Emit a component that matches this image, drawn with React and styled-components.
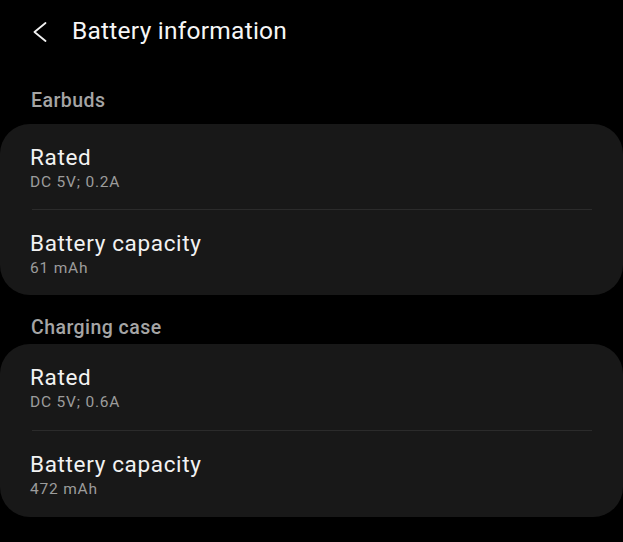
import React from 'react'
import styled, { createGlobalStyle } from 'styled-components'

const GlobalStyle = createGlobalStyle`
  html, body {
    margin: 0;
    padding: 0;
    background: #000;
  }
  body {
    font-family: Roboto, "Noto Sans", sans-serif;
    -webkit-font-smoothing: antialiased;
  }
`

const ScreenStyled = styled.div`
  width: 623px;
  min-height: 542px;
  background: #000;
  color: #f4f4f4;
  overflow: hidden;
`

const HeaderStyled = styled.header`
  height: 62px;
  display: flex;
  align-items: center;
  padding-left: 33px;
  gap: 25px;
`

const BackButtonStyled = styled.button`
  display: flex;
  align-items: center;
  justify-content: center;
  width: 14px;
  height: 20px;
  padding: 0;
  margin-top: 2px;
  border: none;
  background: none;
  cursor: pointer;
`

const TitleStyled = styled.h1`
  margin: 0;
  font-size: 24.5px;
  line-height: 30px;
  font-weight: 400;
  letter-spacing: 0.25px;
  color: #f6f6f6;
`

const SectionLabelStyled = styled.h2`
  margin: ${props => props.$top}px 0 ${props => props.$bottom}px;
  padding-left: 31px;
  font-size: 19.5px;
  line-height: 24px;
  font-weight: 500;
  letter-spacing: 0.45px;
  color: #a5a5a5;
`

const CardStyled = styled.section`
  background: #181818;
  border-radius: 30px;
  display: flex;
  flex-direction: column;
`

const RowStyled = styled.div`
  padding: 19px 31px ${props => props.$bottom}px 30px;
  display: flex;
  flex-direction: column;
`

const DividerStyled = styled.div`
  height: 1px;
  margin: 0 31px 0 32px;
  background: #2b2b2b;
`

const RowTitleStyled = styled.div`
  font-size: 22.5px;
  line-height: 28px;
  letter-spacing: 0.65px;
  color: #f2f2f2;
`

const RowValueStyled = styled.div`
  margin-top: 1px;
  font-size: 15.5px;
  line-height: 20px;
  letter-spacing: 0.8px;
  color: #9c9c9c;
`

const sections = [
  {
    label: 'Earbuds',
    top: 27,
    bottom: 11,
    rowBottom: 17,
    rows: [
      { title: 'Rated', value: 'DC 5V; 0.2A' },
      { title: 'Battery capacity', value: '61 mAh' }
    ]
  },
  {
    label: 'Charging case',
    top: 21,
    bottom: 4,
    rowBottom: 18,
    rows: [
      { title: 'Rated', value: 'DC 5V; 0.6A' },
      { title: 'Battery capacity', value: '472 mAh' }
    ]
  }
]

const BackIcon = () => (
  <svg width="14" height="20" viewBox="0 0 14 20" fill="none">
    <polyline
      points="12.5,1 1.5,10 12.5,19"
      stroke="#f2f2f2"
      strokeWidth="1.8"
      strokeLinecap="round"
      strokeLinejoin="round"
    />
  </svg>
)

export default function App() {
  return (
    <ScreenStyled>
      <GlobalStyle />
      <HeaderStyled>
        <BackButtonStyled aria-label="Back">
          <BackIcon />
        </BackButtonStyled>
        <TitleStyled>Battery information</TitleStyled>
      </HeaderStyled>
      {sections.map(section => (
        <React.Fragment key={section.label}>
          <SectionLabelStyled $top={section.top} $bottom={section.bottom}>
            {section.label}
          </SectionLabelStyled>
          <CardStyled>
            {section.rows.map((row, i) => (
              <React.Fragment key={row.title}>
                {i > 0 && <DividerStyled />}
                <RowStyled $bottom={section.rowBottom}>
                  <RowTitleStyled>{row.title}</RowTitleStyled>
                  <RowValueStyled>{row.value}</RowValueStyled>
                </RowStyled>
              </React.Fragment>
            ))}
          </CardStyled>
        </React.Fragment>
      ))}
    </ScreenStyled>
  )
}
